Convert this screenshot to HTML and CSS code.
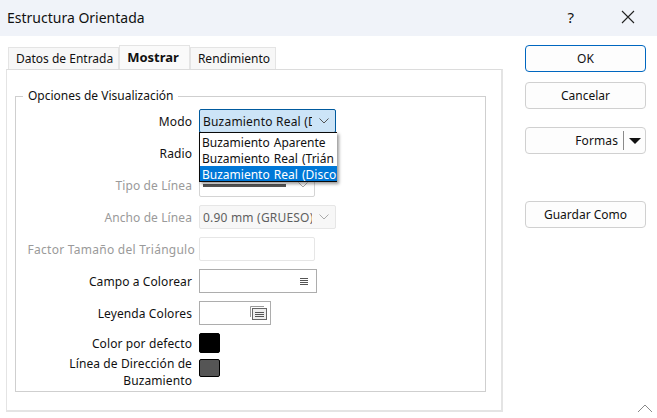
FILE: index.html
```html
<!DOCTYPE html>
<html lang="es">
<head>
    <meta charset="UTF-8">
    <title>Estructura Orientada</title>
    <link rel="stylesheet" href="styles.css">
</head>
<body>
    <div class="titlebar">
        <span class="title">Estructura Orientada</span>
        <span class="help">?</span>
        <svg class="close" width="14" height="14" viewBox="0 0 14 14"><path d="M1 1L13 13M13 1L1 13" stroke="#222" stroke-width="1.1" fill="none"/></svg>
    </div>

    <div class="content">
        <div class="left">
            <div class="tabs">
                <div class="tab">Datos de Entrada</div>
                <div class="tab active">Mostrar</div>
                <div class="tab">Rendimiento</div>
            </div>
            <div class="pane">
                <div class="group">
                    <div class="legend">Opciones de Visualización</div>
                    <div class="form">
                        <label>Modo</label>
                        <div class="combo combo-focus">
                            <span class="combo-text">Buzamiento Real (D</span>
                            <svg class="chev" width="10" height="6" viewBox="0 0 10 6"><path d="M0.5 0.5L5 5L9.5 0.5" stroke="#555" fill="none"/></svg>
                            <ul class="dropdown">
                                <li>Buzamiento Aparente</li>
                                <li>Buzamiento Real (Trián</li>
                                <li class="selected">Buzamiento Real (Disco</li>
                            </ul>
                        </div>

                        <label>Radio</label>
                        <div class="input disabled w-short"></div>

                        <label class="off">Tipo de Línea</label>
                        <div class="combo disabled w-short">
                            <span class="line-sample"></span>
                            <svg class="chev" width="10" height="6" viewBox="0 0 10 6"><path d="M0.5 0.5L5 5L9.5 0.5" stroke="#aaa" fill="none"/></svg>
                        </div>

                        <label class="off">Ancho de Línea</label>
                        <div class="combo disabled">
                            <span class="combo-text">0.90 mm (GRUESO)</span>
                            <svg class="chev" width="10" height="6" viewBox="0 0 10 6"><path d="M0.5 0.5L5 5L9.5 0.5" stroke="#aaa" fill="none"/></svg>
                        </div>

                        <label class="off wide">Factor Tamaño del Triángulo</label>
                        <div class="input disabled w-short"></div>

                        <label>Campo a Colorear</label>
                        <div class="input field w-field">
                            <svg width="8" height="9" viewBox="0 0 8 9"><path d="M0 1.5H8M0 3.5H8M0 5.5H8M0 7.5H8" stroke="#555"/></svg>
                        </div>

                        <label>Leyenda Colores</label>
                        <div class="input field w-legend">
                            <svg width="17" height="14" viewBox="0 0 17 14" fill="none"><path d="M0.5 11V0.5H14" stroke="#999"/><rect x="2.5" y="2.5" width="14" height="11" fill="#eee" stroke="#666"/><path d="M5 6.5H14M5 8.5H14M5 10.5H14" stroke="#555"/></svg>
                        </div>

                        <label class="swatch-label">Color por defecto</label>
                        <div class="swatch black"></div>

                        <label class="two-lines">Línea de Dirección de Buzamiento</label>
                        <div class="swatch grey"></div>
                    </div>
                </div>
            </div>
        </div>

        <div class="buttons">
            <button class="btn btn-default">OK</button>
            <button class="btn">Cancelar</button>
            <div class="btn split">
                <span class="split-text">Formas</span>
                <span class="caret"></span>
            </div>
            <button class="btn save">Guardar Como</button>
        </div>
    </div>

    <svg class="corner" width="18" height="9" viewBox="0 0 18 9"><path d="M1 8L8 1L15 8" stroke="#888" fill="none"/></svg>
</body>
</html>
```

FILE: styles.css
```css
body {
    margin: 0;
    width: 657px;
    height: 418px;
    overflow: hidden;
    position: relative;
    background-color: #ffffff;
    color: #111;
    font-family: 'Noto Sans', sans-serif;
    font-size: 12px;
}

.titlebar {
    display: flex;
    align-items: center;
    height: 36px;
    padding: 0 22px 2px 7px;
    box-sizing: border-box;
    background-color: #f0f3f9;
}

.title {
    flex: 1;
    font-size: 14px;
}

.help {
    font-size: 15px;
    margin-right: 47px;
}

.content {
    display: flex;
    padding-top: 9px;
}

.left {
    width: 497px;
    margin-left: 6px;
}

.tabs {
    display: flex;
    align-items: flex-end;
    height: 24px;
    padding-left: 2px;
}

.tab {
    height: 22px;
    line-height: 21px;
    padding: 0 5px 0 7px;
    box-sizing: border-box;
    background-color: #f7f7f7;
    border: 1px solid #e4e4e4;
    border-bottom: none;
}

.tab.active {
    height: 24px;
    line-height: 22px;
    padding: 0 10px 0 7px;
    background-color: #fafafa;
    font-size: 13px;
    font-weight: bold;
}

.pane {
    height: 343px;
    box-sizing: border-box;
    padding: 26px 15px 0 8px;
    border: 1px solid #e4e4e4;
    border-width: 1px 2px 2px 1px;
    border-top-color: #dcdcdc;
}

.group {
    position: relative;
    height: 296px;
    box-sizing: border-box;
    border: 1px solid #cfcfcf;
}

.legend {
    position: absolute;
    top: -10px;
    left: 7px;
    padding: 0 5px;
    background-color: #ffffff;
}

.form {
    display: grid;
    grid-template-columns: 176px 1fr;
    grid-auto-rows: 24px;
    column-gap: 7px;
    row-gap: 8px;
    padding-top: 12px;
}

.form label {
    text-align: right;
    align-self: center;
    white-space: nowrap;
    letter-spacing: 0.1px;
}

.form label.off {
    color: #9a9a9a;
}

.form label.wide {
    letter-spacing: 0.26px;
    margin-right: -3px;
}

.form label.swatch-label {
    align-self: start;
    line-height: 22px;
}

.form label.two-lines {
    white-space: normal;
    line-height: 17px;
    padding-left: 40px;
    align-self: start;
    margin-top: -10px;
}

.combo {
    position: relative;
    display: flex;
    align-items: center;
    justify-content: space-between;
    width: 137px;
    box-sizing: border-box;
    padding: 0 6px 0 3px;
    border: 1px solid #d0d0d0;
    border-radius: 2px;
}

.combo-text {
    flex: none;
    overflow: hidden;
    white-space: nowrap;
    width: 109px;
    letter-spacing: 0.2px;
}

.combo-focus {
    background-color: #cce4f7;
    border-color: #005a9e;
}

.combo.disabled {
    background-color: #f7f7f7;
    border-color: #e6e6e6;
    color: #5f5f5f;
}

.combo.w-short {
    width: 116px;
    background-color: #ffffff;
    border-color: #d4d4d4;
}

.chev {
    flex-shrink: 0;
}

.dropdown {
    position: absolute;
    z-index: 2;
    top: 22px;
    left: -1px;
    width: 138px;
    height: 50px;
    overflow: hidden;
    box-sizing: border-box;
    margin: 0;
    padding: 2px 0 0;
    list-style: none;
    background-color: #ffffff;
    border: 1px solid #0a0a0a;
    border-right: none;
    box-shadow: 2px 2px 3px rgba(0, 0, 0, 0.4);
    color: #111;
}

.dropdown li {
    height: 16px;
    line-height: 16px;
    padding-left: 2px;
    white-space: nowrap;
    word-spacing: 1px;
}

.dropdown li.selected {
    margin-top: -1px;
    padding-top: 1px;
    background-color: #0078d7;
    color: #ffffff;
}

.input {
    display: flex;
    align-items: center;
    justify-content: flex-end;
    box-sizing: border-box;
    border: 1px solid #e6e6e6;
    border-radius: 2px;
}

.w-short {
    width: 116px;
}

.field {
    border: 1px solid #adadad;
    border-radius: 0;
    padding-right: 8px;
}

.w-field {
    width: 118px;
}

.w-legend {
    width: 72px;
    padding-right: 3px;
}

.line-sample {
    width: 83px;
    height: 3px;
    margin-right: 12px;
    background-color: #555555;
}

.swatch {
    width: 21px;
    height: 20px;
    box-sizing: border-box;
    border: 1px solid #000000;
    border-radius: 2px;
}

.swatch.black {
    background-color: #000000;
}

.swatch.grey {
    margin-top: -6px;
    height: 18px;
    background-color: #555555;
}

.buttons {
    display: flex;
    flex-direction: column;
    margin-left: 22px;
    width: 121px;
}

.btn {
    display: flex;
    align-items: center;
    justify-content: center;
    height: 27px;
    box-sizing: border-box;
    margin-bottom: 10px;
    padding: 0;
    font-family: inherit;
    font-size: 12px;
    color: #111;
    background-color: #fdfdfd;
    border: 1px solid #d0d0d0;
    border-radius: 4px;
}

.btn-default {
    border-color: #0067c0;
}

.split {
    justify-content: flex-end;
    margin-top: 8px;
    margin-bottom: 47px;
}

.split-text {
    height: 19px;
    line-height: 19px;
    padding-right: 5px;
    border-right: 1px solid #8a8a8a;
    letter-spacing: 0.1px;
}

.caret {
    width: 0;
    height: 0;
    margin: 0 4px 0 5px;
    border-left: 6px solid transparent;
    border-right: 6px solid transparent;
    border-top: 6px solid #111;
}

.save {
    margin-bottom: 0;
}

.corner {
    position: absolute;
    right: 2px;
    bottom: 5px;
}
```
